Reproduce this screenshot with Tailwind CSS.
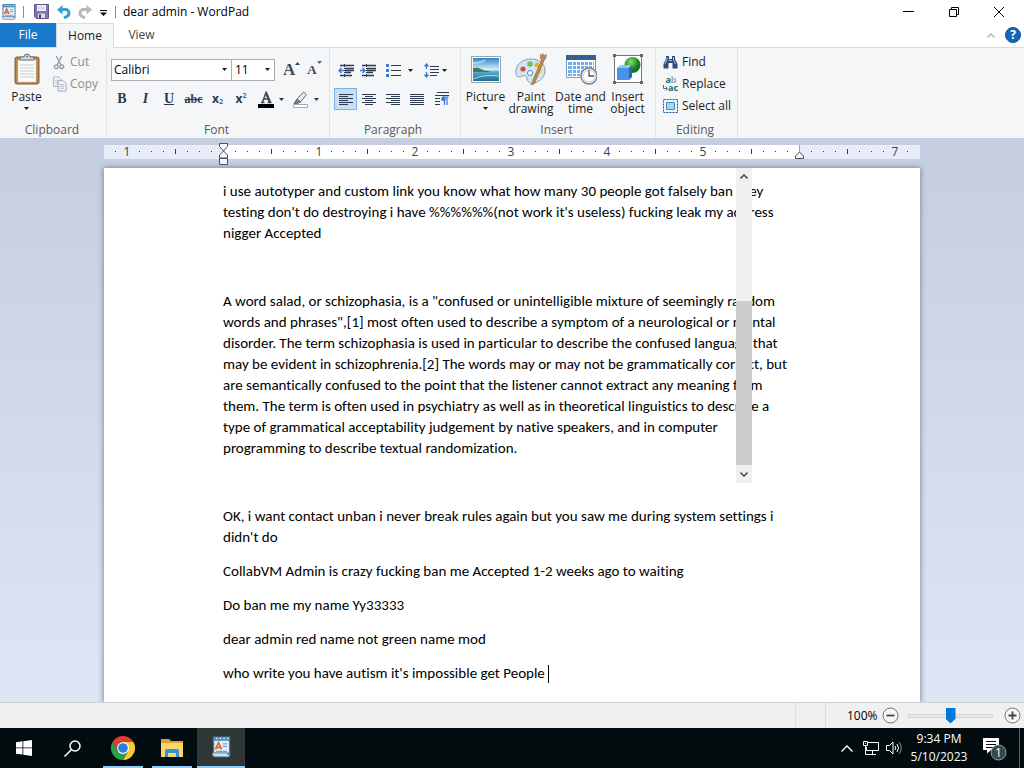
<!DOCTYPE html>
<html lang="en">
<head>
<meta charset="utf-8">
<meta name="viewport" content="width=device-width, initial-scale=1">
<title>dear admin - WordPad</title>
<script src="https://cdn.jsdelivr.net/npm/@tailwindcss/browser@4"></script>
</head>
<body class="flex h-screen flex-col overflow-hidden bg-white font-[family-name:'Open_Sans',sans-serif] text-[12px] leading-[12px] text-[#1e1e1e]">
<svg class="hidden">
  <symbol id="caret" viewBox="0 0 5 3"><path d="M0 0h5L2.5 3z" fill="currentColor"/></symbol>
  <symbol id="wp" viewBox="0 0 16 18"><path d="M2 1h13v13H2z" fill="#e6f0f8" stroke="#3f7ca8"/><path d="M2 1h13v3H2z" fill="#4f93c0"/><path d="M4 2h1M7 2h1M10 2h1M13 2h1" stroke="#fff"/><path d="M3.500 11 6 5.500 8.500 11M4.500 9.500h3" stroke="#d8692c" stroke-width="1.400" fill="none"/><path d="M9.500 6.500H13M9.500 8.500H13M4 12.500h9" stroke="#6aa5d8"/><path d="M1 14h12c0 2 3 2 2 0v2q0 1-1.500 1H3q-2 0-2-3z" fill="#d5e1e9" stroke="#6c94ae" stroke-width=".7"/></symbol>
</svg>

<header class="flex h-[23px] shrink-0 items-center">
  <svg class="ml-[1px] h-[18px] w-[15px]"><use href="#wp"/></svg>
  <span class="ml-[7px] h-[12px] w-px bg-[#8c8c8c]"></span>
  <button class="ml-[10px]" aria-label="Save"><svg class="h-[15px] w-[15px]" viewBox="0 0 15 15"><path d="M.5.5h14v14h-12l-2-2z" fill="#8272b0" stroke="#63548f"/><path d="M3 1h9v6H3z" fill="#f5f4fa"/><path d="M4 3h7M4 5h7" stroke="#c4c0d8"/><path d="M4 9.500h7V14H4z" fill="#d9d7e6"/><path d="M5 10.500h2V14H5z" fill="#4a3f70"/></svg></button>
  <button class="ml-[8px]" aria-label="Undo"><svg class="h-[14px] w-[14px]" viewBox="0 0 14 14"><path d="M4 4.500h4.500a3.600 3.600 0 0 1 1 7L7 13" fill="none" stroke="#3b9fd6" stroke-width="3"/><path d="M0 4.800 5.500 0v9.500z" fill="#3b9fd6"/></svg></button>
  <button class="ml-[7px]" aria-label="Redo"><svg class="h-[14px] w-[14px]" viewBox="0 0 14 14"><path d="M10 4.500H5.500a3.600 3.600 0 0 0-1 7L7 13" fill="none" stroke="#b5b9be" stroke-width="3"/><path d="M14 4.800 8.500 0v9.500z" fill="#b5b9be"/></svg></button>
  <button class="ml-[8px] mt-[3px]" aria-label="Customize Quick Access Toolbar"><svg class="h-[6px] w-[7px]" viewBox="0 0 7 6"><path d="M0 .5h7" stroke="#000"/><path d="M0 2.500h7L3.500 6z"/></svg></button>
  <span class="ml-[8px] h-[12px] w-px bg-[#8c8c8c]"></span>
  <h1 class="ml-[7px] whitespace-nowrap text-black">dear admin - WordPad</h1>
  <div class="ml-auto flex h-full items-center">
    <button class="grid h-full w-[46px] place-items-center" aria-label="Minimize"><svg class="h-[11px] w-[11px]" viewBox="0 0 11 11"><path d="M0 5.500h11" stroke="#000"/></svg></button>
    <button class="grid h-full w-[45px] place-items-center" aria-label="Restore"><svg class="h-[10px] w-[10px]" viewBox="0 0 10 10"><path d="M.5 2.500h7v7h-7zM2.500 2.500v-2h7v7h-2" fill="none" stroke="#000"/></svg></button>
    <button class="mr-[2px] grid h-full w-[46px] place-items-center" aria-label="Close"><svg class="h-[10px] w-[10px]" viewBox="0 0 10 10"><path d="m0 0 10 10M10 0 0 10" stroke="#000"/></svg></button>
  </div>
</header>

<nav class="flex h-[24px] shrink-0 items-stretch">
  <button class="w-[56px] bg-[#1979ca] text-white">File</button>
  <button class="z-10 -mb-px w-[58px] border-x border-t border-[#dadbdc] bg-[#f5f6f7]">Home</button>
  <button class="w-[55px] text-[#444]">View</button>
  <button class="ml-auto mr-[10px]" aria-label="Minimize the Ribbon"><svg class="h-[5px] w-[8px]" viewBox="0 0 8 5"><path d="m.5 4.500 3.500-3.500 3.500 3.500" fill="none" stroke="#b8b8b8" stroke-width="1.500"/></svg></button>
  <button class="my-auto mr-[3px] grid h-[16px] w-[16px] place-items-center rounded-full border border-[#0d4f94] bg-[#1568b8] text-[12px] font-bold text-white" aria-label="Help">?</button>
</nav>

<section class="flex h-[91px] shrink-0 border-t border-[#dadbdc] bg-[#f5f6f7]" aria-label="Ribbon">
  <div class="flex w-[107px] flex-col border-r border-[#e2e3e4]">
    <div class="flex h-[73px] text-[#8d8d8d]">
      <button class="flex w-[53px] flex-col items-center pt-[5px] text-[#1e1e1e]">
        <svg class="h-[32px] w-[26px]" viewBox="0 0 26 32"><rect x="1" y="4" width="24" height="27" rx="2" fill="#b78746" stroke="#80602f"/><path d="M4 7h18v22H4z" fill="#fbfbfb" stroke="#c8ccd0" stroke-width=".6"/><path d="M6 12h14M6 15h14M6 18h14M6 21h14M6 24h14" stroke="#c7ccd2"/><path d="M6 7V4h4q0-3 3-3t3 3h4v3z" fill="#d4dadf" stroke="#66717b"/><circle cx="13" cy="3.500" r="1" fill="#66717b"/></svg>
        <span class="mt-[6px]">Paste</span><svg class="mt-[4px] h-[3px] w-[5px]"><use href="#caret"/></svg>
      </button>
      <div class="flex flex-col pt-[3px]">
        <button class="flex h-[22px] items-center gap-[4px]"><svg class="h-[15px] w-[13px]" viewBox="0 0 14 15"><path d="m3.500.5 5 9.500M9.500.5 4.500 10" stroke="#9aa3b0" stroke-width="1.600" fill="none"/><circle cx="3.500" cy="12" r="2" fill="none" stroke="#8f99a8" stroke-width="1.400"/><circle cx="9.500" cy="12" r="2" fill="none" stroke="#8f99a8" stroke-width="1.400"/></svg>Cut</button>
        <button class="flex h-[22px] items-center gap-[3px]"><svg class="h-[16px] w-[14px]" viewBox="0 0 15 16"><path d="M.5.5H6l2.500 2.500v7.500h-8z" fill="#f8f9fb" stroke="#a4adbb"/><path d="M2 4h4M2 6h4M2 8h4" stroke="#b9c2d0"/><path d="M5.500 4.500H11l3 3v8H5.500z" fill="#f8f9fb" stroke="#98a3b3"/><path d="M7 8.500h5M7 10.500h5M7 12.500h5" stroke="#a9b5c6"/></svg>Copy</button>
      </div>
    </div>
    <div class="mr-[2px] pt-[3px] text-center text-[#5a5a5a]">Clipboard</div>
  </div>

  <div class="flex w-[223px] flex-col border-r border-[#e2e3e4]">
    <div class="h-[73px] px-[3px] pt-[11px]">
      <div class="flex h-[22px] items-center">
        <div class="relative ml-px h-[22px] w-[121px]"><select aria-label="Font family" class="h-full w-full appearance-none border border-[#abadb3] bg-white px-[2px] text-[12px] leading-[18px] text-black"><option>Calibri</option></select><svg class="pointer-events-none absolute right-[5px] top-[9px] h-[3px] w-[5px]"><use href="#caret"/></svg></div>
        <div class="relative h-[22px] w-[43px]"><select aria-label="Font size" class="h-full w-full appearance-none border border-l-0 border-[#abadb3] bg-white px-[3px] text-[12px] leading-[18px] text-black"><option>11</option></select><svg class="pointer-events-none absolute right-[5px] top-[9px] h-[3px] w-[5px]"><use href="#caret"/></svg></div>
        <button class="ml-[8px] flex items-start font-[family-name:'Liberation_Serif',serif] text-[17px] font-bold leading-[20px] text-[#3f4a55]" aria-label="Grow font">A<svg class="mt-[2px] h-[3px] w-[5px]" viewBox="0 0 5 3"><path d="M0 3h5L2.500 0z" fill="#33475e"/></svg></button>
        <button class="ml-[7px] flex items-start font-[family-name:'Liberation_Serif',serif] text-[13px] font-bold leading-[22px] text-[#3f4a55]" aria-label="Shrink font">A<svg class="mt-[2px] h-[3px] w-[5px]" viewBox="0 0 5 3"><path d="M0 0h5L2.500 3z" fill="#2f6fc0"/></svg></button>
      </div>
      <div class="mt-[7px] flex h-[22px] items-center text-[#2a3a4e]">
        <button class="w-[24px] font-[family-name:'Liberation_Serif',serif] text-[14px] font-bold">B</button>
        <button class="w-[23px] font-[family-name:'Liberation_Serif',serif] text-[14px] font-bold italic">I</button>
        <button class="w-[24px] font-[family-name:'Liberation_Serif',serif] text-[14px] font-bold underline">U</button>
        <button class="w-[25px] font-[family-name:'Liberation_Serif',serif] text-[12px] font-bold line-through">abc</button>
        <button class="flex w-[23px] items-end justify-center text-[12px] font-bold" aria-label="Subscript">x<span class="text-[7px] leading-[6px] text-[#2f6fc0]">2</span></button>
        <button class="flex w-[24px] items-start justify-center text-[12px] font-bold" aria-label="Superscript">x<span class="text-[7px] leading-[6px] text-[#2f6fc0]">2</span></button>
        <button class="flex w-[36px] items-center justify-center gap-[5px]" aria-label="Text color"><svg class="h-[17px] w-[16px]" viewBox="0 0 16 17"><path d="M3 11.500h3.500M9.500 11.500h4M4.500 11 8 1.500 12 11M6 8h4.500" fill="none" stroke="#3f4a55" stroke-width="1.500"/><path d="m8 1.500 4 10" stroke="#3f4a55" stroke-width="2.200"/><path d="M0 13h16v4H0z" fill="#000"/></svg><svg class="h-[3px] w-[5px]"><use href="#caret"/></svg></button>
        <button class="flex w-[32px] items-center justify-center gap-[5px]" aria-label="Text highlight color"><svg class="h-[17px] w-[17px]" viewBox="0 0 17 17"><path d="M1.500 13.500h14v3h-14z" fill="#fff" stroke="#a6aab0"/><path d="m5 8 6.500-7 3 2.500-6 7.500z" fill="#e9ebee" stroke="#636b75"/><path d="m5 8 3.500 3-3 1.500H2z" fill="#75808c" stroke="#636b75"/></svg><svg class="h-[3px] w-[5px]"><use href="#caret"/></svg></button>
      </div>
    </div>
    <div class="mr-[3px] pt-[3px] text-center text-[#5a5a5a]">Font</div>
  </div>

  <div class="flex w-[131px] flex-col border-r border-[#e2e3e4]">
    <div class="h-[73px] px-[4px] pt-[11px]">
      <div class="flex h-[22px] items-center">
        <button class="ml-[4px]" aria-label="Decrease indent"><svg class="h-[13px] w-[16px]" viewBox="0 0 16 13"><path d="M2 1.500h14M7 4.500h9M7 6.500h9M7 8.500h6M2 11.500h12" stroke="#2d3b50" stroke-width="1.400"/><path d="M6.500 0v13" stroke="#2d3b50" stroke-dasharray="1 1"/><path d="M1 6.500h5M3.500 4 1 6.500 3.500 9" stroke="#3d78d8" stroke-width="1.500" fill="none"/></svg></button>
        <button class="ml-[6px]" aria-label="Increase indent"><svg class="h-[13px] w-[16px]" viewBox="0 0 16 13"><path d="M2 1.500h14M7 4.500h9M7 6.500h9M7 8.500h6M2 11.500h12" stroke="#2d3b50" stroke-width="1.400"/><path d="M6.500 0v13" stroke="#2d3b50" stroke-dasharray="1 1"/><path d="M0 6.500h5M2.500 4 5 6.500 2.500 9" stroke="#3d78d8" stroke-width="1.500" fill="none"/></svg></button>
        <button class="ml-[10px] flex items-center gap-[7px]" aria-label="Start a list"><svg class="h-[13px] w-[15px]" viewBox="0 0 15 13"><path d="M0 0h3v3H0zM0 5h3v3H0zM0 10h3v3H0z" fill="#3d78d8"/><path d="M5 1.500h10M5 6.500h10M5 11.500h10" stroke="#2d3b50"/></svg><svg class="h-[3px] w-[5px]"><use href="#caret"/></svg></button>
        <button class="ml-[11px] flex items-center gap-[3px]" aria-label="Line spacing"><svg class="h-[15px] w-[15px]" viewBox="0 0 15 15"><path d="M2.500 1v5M.5 3.500l2-2.500 2 2.500M2.500 9v5M.5 11.500l2 2.500 2-2.500" fill="none" stroke="#3d78d8" stroke-width="1.300"/><path d="M6 3.500h9M6 6.500h9M6 9.500h9M6 12.500h7" stroke="#2d3b50"/></svg><svg class="h-[3px] w-[5px]"><use href="#caret"/></svg></button>
      </div>
      <div class="mt-[7px] flex h-[22px] items-center">
        <button class="grid h-[22px] w-[23px] place-items-center border border-[#7fb1dc] bg-[#c5dff5]" aria-label="Align left" aria-pressed="true"><svg class="h-[11px] w-[14px]" viewBox="0 0 14 11"><path d="M0 .5h14M0 2.500h9M0 4.500h14M0 6.500h9M0 8.500h14M0 10.500h9" stroke="#2d3b50"/></svg></button>
        <button class="grid h-[22px] w-[24px] place-items-center" aria-label="Center"><svg class="h-[11px] w-[14px]" viewBox="0 0 14 11"><path d="M0 .5h14M3 2.500h8M0 4.500h14M3 6.500h8M0 8.500h14M3 10.500h8" stroke="#2d3b50"/></svg></button>
        <button class="grid h-[22px] w-[24px] place-items-center" aria-label="Align right"><svg class="h-[11px] w-[14px]" viewBox="0 0 14 11"><path d="M0 .5h14M5 2.500h9M0 4.500h14M5 6.500h9M0 8.500h14M5 10.500h9" stroke="#2d3b50"/></svg></button>
        <button class="grid h-[22px] w-[23px] place-items-center" aria-label="Justify"><svg class="h-[11px] w-[14px]" viewBox="0 0 14 11"><path d="M0 .5h14M0 2.500h14M0 4.500h14M0 6.500h14M0 8.500h14M0 10.500h14" stroke="#2d3b50"/></svg></button>
        <button class="grid h-[22px] w-[27px] place-items-center" aria-label="Paragraph"><svg class="h-[14px] w-[14px]" viewBox="0 0 14 14"><path d="M2 .5h12M0 3.500h14M0 6.500h5M0 9.500h5M0 12.500h5" stroke="#2d3b50"/><path d="M9.500 13V5M12 13V5M7.500 5h6" stroke="#3d78d8" stroke-width="1.200"/><circle cx="8.500" cy="7" r="2.300" fill="#3d78d8"/></svg></button>
      </div>
    </div>
    <div class="mr-[4px] pt-[3px] text-center text-[#5a5a5a]">Paragraph</div>
  </div>

  <div class="flex w-[195px] flex-col border-r border-[#e2e3e4]">
    <div class="flex h-[73px] pl-[2px] pt-[5px]">
      <button class="flex w-[45px] flex-col items-center">
        <svg class="h-[32px] w-[32px]" viewBox="0 0 32 32"><defs><linearGradient id="sky" x2="0" y2="1"><stop stop-color="#2a86ca"/><stop offset=".5" stop-color="#d9eef5"/><stop offset=".6" stop-color="#58acc9"/><stop offset="1" stop-color="#1a6f97"/></linearGradient></defs><path d="M1.500 3.500h29v26h-29z" fill="#fff" stroke="#9ba3a8"/><path d="M3 5h26v23H3z" fill="url(#sky)"/><path d="M3 15q5-1 8 1t7 2l3 1H3z" fill="#3d7a62"/><path d="M3 10q8 0 12-3" stroke="#e8f5fa" stroke-width="2" fill="none" opacity=".5"/><path d="M3 26q12-5 26-3" stroke="#a1ddd8" fill="none"/></svg>
        <span class="mt-[6px]">Picture</span><svg class="mt-[4px] h-[3px] w-[5px]"><use href="#caret"/></svg>
      </button>
      <button class="flex w-[46px] flex-col items-center">
        <svg class="h-[32px] w-[32px]" viewBox="0 0 32 32"><path d="M16 6C6 6 0 13 1 20c0 4 3 5 6 3 3-1 5 0 5 3 1 4 5 5 10 3 5-2 8-7 8-11 0-8-6-12-14-12z" fill="#d2e5f3" stroke="#839eb5"/><circle cx="15" cy="11" r="2.800" fill="#6fbf57"/><circle cx="8" cy="16" r="2.600" fill="#d74b3c"/><circle cx="22" cy="12" r="2.500" fill="#ecac43"/><circle cx="25" cy="18" r="2.300" fill="#f2ce58"/><circle cx="15" cy="20" r="2.500" fill="#fff" stroke="#4885c4"/><path d="m28 4 2 1-10 24q-1 3-4 3 2-2 2-5z" fill="#c98a42" stroke="#91602b" stroke-width=".7"/><path d="m25 0 1 2 2-2 1 2 3-1-1 5-3 2-3-2z" fill="#b48865"/></svg>
        <span class="mt-[6px]">Paint<br>drawing</span>
      </button>
      <button class="flex w-[53px] flex-col items-center">
        <svg class="h-[32px] w-[32px]" viewBox="0 0 32 32"><path d="M1.500 2.500h29v22h-29z" fill="#fff" stroke="#7f9cba"/><path d="M1 2h30v5H1z" fill="#366092"/><path d="M3 9h26v14H3z" fill="#70aeea"/><path d="M7.500 8v16M11.500 8v16M15.500 8v16M19.500 8v16M23.500 8v16M27.500 8v16M2 12.500h28M2 16.500h28M2 20.500h28" stroke="#fff"/><circle cx="24" cy="23" r="8" fill="#eff1f3" stroke="#7c858e" stroke-width="1.500"/><circle cx="24" cy="23" r="5.800" fill="#fff" stroke="#d2d6db"/><path d="M24 17v6h5" fill="none" stroke="#485767" stroke-width="1.300"/></svg>
        <span class="mt-[6px] whitespace-nowrap">Date and<br>time</span>
      </button>
      <button class="flex w-[41px] flex-col items-center">
        <svg class="h-[32px] w-[32px]" viewBox="0 0 32 32"><defs><radialGradient id="ball" cx=".4" cy=".3"><stop stop-color="#8fdc6b"/><stop offset="1" stop-color="#137a23"/></radialGradient></defs><path d="M2.500 2.500h27v27h-27z" fill="#fff" stroke="#777"/><circle cx="20.500" cy="12" r="8" fill="url(#ball)"/><path d="m5 15 3-3h12l-3 3z" fill="#8fc4f6"/><path d="M5 15h12v12H5z" fill="#4792e2"/><path d="m17 15 3-3v12l-3 3z" fill="#2369b6"/><path d="M1 1h3v3H1zM28 1h3v3h-3zM1 28h3v3H1zM28 28h3v3h-3z" fill="#666"/></svg>
        <span class="mt-[6px]">Insert<br>object</span>
      </button>
    </div>
    <div class="mr-[3px] pt-[3px] text-center text-[#5a5a5a]">Insert</div>
  </div>

  <div class="flex w-[82px] flex-col border-r border-[#e2e3e4]">
    <div class="flex h-[73px] flex-col items-start pl-[7px] pt-[3px]">
      <button class="flex h-[22px] items-center gap-[4px]"><svg class="h-[14px] w-[15px]" viewBox="0 0 15 14"><path d="M3 1h3v3h3V1h3v3l2.500 5v4.500h-5V8h-4v5.500h-5V9L3 4z" fill="#2f4b78"/><path d="M4 2v3L2 9M10.500 2v3l2 4" stroke="#9eb9e0" fill="none"/><path d="M6 5.500h3" stroke="#a8c0e4"/></svg>Find</button>
      <button class="flex h-[22px] items-center gap-[3px]" aria-label="Replace"><span class="flex w-[16px] flex-col text-[9px] font-bold leading-[8px] text-[#27666b]"><span>a<span class="text-[#9fa8b3]">b</span></span><span class="flex items-center"><svg class="h-[6px] w-[5px] shrink-0" viewBox="0 0 5 6"><path d="M.5 0v3.500H4M2.500 1.500l2 2-2 2" fill="none" stroke="#3772c8"/></svg>ac</span></span>Replace</button>
      <button class="flex h-[22px] items-center gap-[4px] whitespace-nowrap"><svg class="h-[14px] w-[15px]" viewBox="0 0 15 14"><path d="M.5.5h14v13H.5z" fill="none" stroke="#1f5587" stroke-dasharray="2 1"/><path d="M3.500 3.500h8v7h-8z" fill="#a5d3f2" stroke="#3b8bc6"/></svg>Select all</button>
    </div>
    <div class="mr-[3px] pt-[3px] text-center text-[#5a5a5a]">Editing</div>
  </div>
</section>

<main class="flex min-h-0 flex-1 flex-col items-center overflow-hidden bg-linear-to-b from-[#c5cee0] to-[#dce6f4]">
  <svg class="mt-[5px] h-[25px] w-[816px] shrink-0 text-[#3b414d]" viewBox="0 0 816 25" aria-label="Ruler">
    <defs><pattern id="ticks" x="119" width="96" height="25" patternUnits="userSpaceOnUse"><path d="M12 8.500h1M24 8.500h1M36 8.500h1M60 8.500h1M72 8.500h1M84 8.500h1" stroke="#333a48"/><path d="M48.500 6v5" stroke="#333a48"/></pattern></defs>
    <path d="M0 2h816v14H0z" fill="#e9edf7"/><path d="M119 2h577v14H119z" fill="#fff"/>
    <path d="M8 2h800v14H8z" fill="url(#ticks)"/>
    <g font-family="Open Sans" font-size="12" fill="currentColor" text-anchor="middle"><text x="23" y="13">1</text><text x="215" y="13">1</text><text x="311" y="13">2</text><text x="407" y="13">3</text><text x="503" y="13">4</text><text x="599" y="13">5</text><text x="791" y="13">7</text></g>
    <path d="M115.500.5h8v3l-4 4.500-4-4.500zM119.500 8l4 4v3h-8v-3zM115.500 15.500h8v6h-8z" fill="#f7f8fa" stroke="#4a4f58"/>
    <path d="M695.500 2v7" stroke="#9aa0ab"/><path d="m695.500 9 4 4v2.500h-8V13z" fill="#f7f8fa" stroke="#4a4f58"/>
  </svg>
  <article class="relative w-[816px] flex-1 whitespace-nowrap bg-white pl-[119px] pt-[13px] font-[family-name:'Carlito','Lato',sans-serif] text-[15px] leading-[21px] text-black shadow-[0_0_5px_1px_#8992a5] [font-variant-ligatures:none]">
    <p class="mb-[13px]">i use autotyper and custom link you know what how many 30 people got falsely ban they<br>testing don't do destroying i have %%%%%%(not work it's useless) fucking leak my address<br>nigger Accepted</p>
    <p class="mb-[13px]">&nbsp;</p>
    <p class="mb-[13px]">A word salad, or schizophasia, is a "confused or unintelligible mixture of seemingly random<br>words and phrases",[1] most often used to describe a symptom of a neurological or mental<br>disorder. The term schizophasia is used in particular to describe the confused language that<br>may be evident in schizophrenia.[2] The words may or may not be grammatically correct, but<br>are semantically confused to the point that the listener cannot extract any meaning from<br>them. The term is often used in psychiatry as well as in theoretical linguistics to describe a<br>type of grammatical acceptability judgement by native speakers, and in computer<br>programming to describe textual randomization.</p>
    <p class="mb-[13px]">&nbsp;</p>
    <p class="mb-[13px]">OK, i want contact unban i never break rules again but you saw me during system settings i<br>didn't do</p>
    <p class="mb-[13px]">CollabVM Admin is crazy fucking ban me Accepted 1-2 weeks ago to waiting</p>
    <p class="mb-[13px]">Do ban me my name Yy33333</p>
    <p class="mb-[13px]">dear admin red name not green name mod</p>
    <p class="flex items-center">who write you have autism it's impossible get People<span class="ml-[3px] h-[18px] w-px bg-black"></span></p>
    <div class="absolute left-[632px] top-0 flex h-[315px] w-[16px] flex-col bg-[#f0f0f0]">
      <button class="grid h-[17px] place-items-center" aria-label="Scroll up"><svg class="h-[5px] w-[8px]" viewBox="0 0 8 5"><path d="M.5 4.500 4 1l3.500 3.500" fill="none" stroke="#505050" stroke-width="1.600"/></svg></button>
      <div class="mt-auto h-[164px] bg-[#cdcdcd]"></div>
      <button class="grid h-[18px] place-items-center" aria-label="Scroll down"><svg class="h-[5px] w-[8px]" viewBox="0 0 8 5"><path d="M.5.5 4 4 7.500.5" fill="none" stroke="#505050" stroke-width="1.600"/></svg></button>
    </div>
  </article>
</main>

<footer class="z-10 flex h-[26px] shrink-0 items-center justify-end border-t border-[#d0d0d0] bg-[#f0f0f0] text-black">
  <span class="h-full w-[31px] border-x border-[#dcdcdc]"></span>
  <label for="zoom" class="ml-[21px] w-[29px]">100%</label>
  <button class="ml-[6px]" aria-label="Zoom out"><svg class="h-[17px] w-[17px]" viewBox="0 0 17 17"><circle cx="8.500" cy="8.500" r="7.500" fill="#f6f6f6" stroke="#707070"/><path d="M4.500 8.500h8" stroke="#444" stroke-width="1.800"/></svg></button>
  <input id="zoom" type="range" min="0" max="100" value="50" class="ml-[9px] h-[16px] w-[85px] appearance-none bg-transparent [&::-webkit-slider-runnable-track]:h-[4px] [&::-webkit-slider-runnable-track]:border [&::-webkit-slider-runnable-track]:border-[#d6d6d6] [&::-webkit-slider-runnable-track]:bg-[#e7eaea] [&::-webkit-slider-thumb]:mt-[-7px] [&::-webkit-slider-thumb]:h-[16px] [&::-webkit-slider-thumb]:w-[10px] [&::-webkit-slider-thumb]:appearance-none [&::-webkit-slider-thumb]:bg-[#0078d7] [&::-webkit-slider-thumb]:[clip-path:polygon(0_0,100%_0,100%_70%,50%_100%,0_70%)]">
  <button class="ml-[11px] mr-[3px]" aria-label="Zoom in"><svg class="h-[17px] w-[17px]" viewBox="0 0 17 17"><circle cx="8.500" cy="8.500" r="7.500" fill="#f6f6f6" stroke="#707070"/><path d="M4.500 8.500h8M8.500 4.500v8" stroke="#444" stroke-width="1.800"/></svg></button>
</footer>

<div class="z-10 flex h-[40px] shrink-0 items-stretch bg-[#020c0e] text-white">
  <button class="grid w-[48px] place-items-center" aria-label="Start"><svg class="h-[16px] w-[16px]" viewBox="0 0 16 16"><path d="m0 2.200 6.500-.9v6.200H0zM7.300 1.200 16 0v7.500H7.300zM0 8.300h6.500v6.300L0 13.700zM7.300 8.300H16V16l-8.700-1.200z" fill="#fff"/></svg></button>
  <button class="grid w-[48px] place-items-center" aria-label="Search"><svg class="h-[17px] w-[17px]" viewBox="0 0 17 17"><circle cx="11" cy="6" r="5" fill="none" stroke="#fff" stroke-width="1.500"/><path d="m7.500 9.500-7 7" stroke="#fff" stroke-width="1.500"/></svg></button>
  <button class="ml-[7px] grid w-[40px] place-items-center border-b-2 border-[#8fcdf6]" aria-label="Google Chrome"><svg class="mt-[2px] h-[24px] w-[24px]" viewBox="0 0 24 24"><path d="M12 6h10.400A12 12 0 0 0 1.600 6l5.200 9A6 6 0 0 1 12 6z" fill="#e33b2e"/><path d="M17.200 15 12 24A12 12 0 0 0 22.400 6H12z" fill="#fcc934"/><path d="M6.800 15 1.600 6A12 12 0 0 0 12 24l5.200-9z" fill="#2b9f4b"/><circle cx="12" cy="12" r="6" fill="#fff"/><circle cx="12" cy="12" r="4.800" fill="#2f7be5"/></svg></button>
  <button class="ml-[9px] grid w-[40px] place-items-center border-b-2 border-[#8fcdf6]" aria-label="File Explorer"><svg class="mt-[2px] h-[18px] w-[22px]" viewBox="0 0 22 18"><path d="M0 0h8l2 2h12v4H0z" fill="#dda13b"/><path d="M0 4h22v14H0z" fill="#fbd566"/><path d="M4 18v-6q0-2 2-2h10q2 0 2 2v6h-3v-4H7v4z" fill="#3491cf"/></svg></button>
  <button class="ml-[5px] grid w-[48px] place-items-center border-b-2 border-[#8fcdf6] bg-[#303738]" aria-label="WordPad"><svg class="h-[22px] w-[20px]"><use href="#wp"/></svg></button>
  <div class="ml-auto flex items-center">
    <button aria-label="Show hidden icons"><svg class="h-[7px] w-[12px]" viewBox="0 0 12 7"><path d="m.5 6.500 5.500-5.500 5.500 5.500" fill="none" stroke="#fff" stroke-width="1.400"/></svg></button>
    <button class="ml-[10px]" aria-label="Network"><svg class="h-[14px] w-[16px]" viewBox="0 0 16 14"><path d="M5 1.500h10.500v8H3.500V6M9.500 10v3M6 13.500h7" fill="none" stroke="#fff"/><path d="M.5.500h4v4h-4zM2.500 5v8.500H6" fill="none" stroke="#fff"/><path d="M2 2h1v1H2z" fill="#fff"/></svg></button>
    <button class="ml-[7px]" aria-label="Volume"><svg class="h-[14px] w-[17px]" viewBox="0 0 17 14"><path d="M.5 4.500h3L7 1v12L3.500 9.500h-3z" fill="none" stroke="#fff"/><path d="M9 5q1.500 2 0 4M11 3q3 4 0 8" fill="none" stroke="#fff"/><path d="M13 1q4.500 6 0 12" fill="none" stroke="#85898a"/></svg></button>
    <button class="ml-[4px] w-[64px] whitespace-nowrap text-center leading-[18px]">9:34 PM<br>5/10/2023</button>
    <button class="ml-[12px]" aria-label="Notifications, 1 new"><svg class="h-[26px] w-[24px]" viewBox="0 0 24 26"><path d="M0 3h16v12H8l-4 3.500V15H0z" fill="#fff"/><path d="M3 6.500h10M3 9.500h10M3 12.500h7" stroke="#020c0e"/><circle cx="15.500" cy="17.500" r="7.500" fill="#39464a" stroke="#9aa0a2"/><text x="15.500" y="22" text-anchor="middle" font-family="Open Sans" font-size="12" fill="#fff">1</text></svg></button>
    <span class="ml-[12px] mr-[4px] h-[40px] w-px bg-[#5b6263]"></span>
  </div>
</div>
</body>
</html>
